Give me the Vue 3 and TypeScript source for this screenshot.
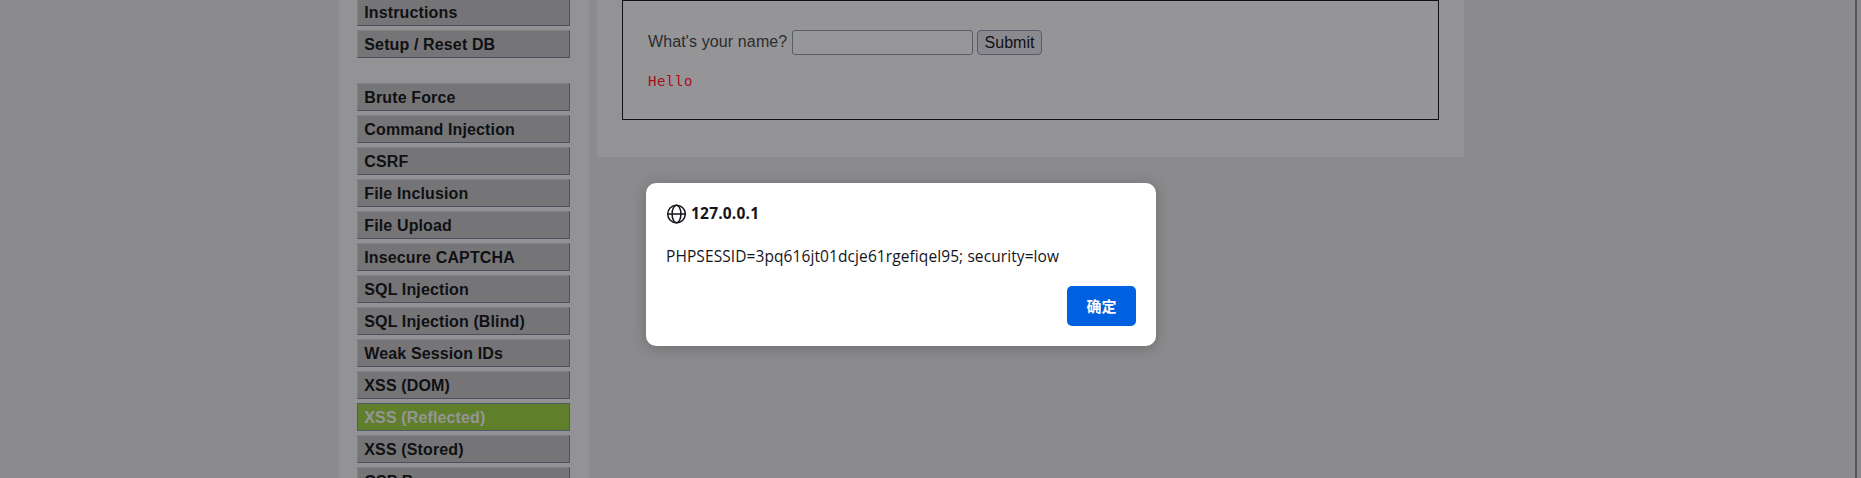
<script setup lang="ts">
interface MenuItem {
  label: string
  active?: boolean
}

const groups: MenuItem[][] = [
  [{ label: 'Instructions' }, { label: 'Setup / Reset DB' }],
  [
    { label: 'Brute Force' },
    { label: 'Command Injection' },
    { label: 'CSRF' },
    { label: 'File Inclusion' },
    { label: 'File Upload' },
    { label: 'Insecure CAPTCHA' },
    { label: 'SQL Injection' },
    { label: 'SQL Injection (Blind)' },
    { label: 'Weak Session IDs' },
    { label: 'XSS (DOM)' },
    { label: 'XSS (Reflected)', active: true },
    { label: 'XSS (Stored)' },
    { label: 'CSP Bypass' },
  ],
]
</script>

<template>
  <div class="page">
    <nav class="sidebar">
      <ul v-for="(group, index) in groups" :key="index" class="menu">
        <li v-for="item in group" :key="item.label" class="item" :class="{ active: item.active }">
          {{ item.label }}
        </li>
      </ul>
    </nav>
    <main class="content">
      <section class="panel">
        <form class="form" @submit.prevent>
          <label class="label" for="name">What's your name?</label>
          <input id="name" class="field" type="text" />
          <button class="submit" type="submit">Submit</button>
        </form>
        <pre class="reply">Hello</pre>
      </section>
    </main>
    <div class="scrollbar"></div>
    <div class="dialog" role="alertdialog">
      <header class="origin">
        <svg class="globe" viewBox="0 0 20 20" fill="none" stroke="#15141a" stroke-width="1.5">
          <circle cx="10.5" cy="10" r="8.8" />
          <ellipse cx="10.5" cy="10" rx="4.4" ry="8.8" />
          <path d="M1.7 10h17.6" />
        </svg>
        <span class="host">127.0.0.1</span>
      </header>
      <p class="message">PHPSESSID=3pq616jt01dcje61rgefiqel95; security=low</p>
      <button class="confirm" type="button">确定</button>
    </div>
  </div>
</template>

<style>
body {
  margin: 0;
  overflow: hidden;
}
</style>

<style scoped>
.page {
  position: relative;
  display: flex;
  align-items: flex-start;
  box-sizing: border-box;
  width: 1861px;
  height: 478px;
  padding-left: 339px;
  overflow: hidden;
  background: #8b8b8d;
  font-family: "Liberation Sans", Arial, sans-serif;
  font-size: 16px;
}
.sidebar {
  box-sizing: border-box;
  width: 250px;
  height: 478px;
  padding: 0 19px 0 18px;
  overflow: hidden;
  background: #939395;
}
.menu {
  display: flex;
  flex-direction: column;
  gap: 4px;
  margin: -2px 0 25px;
  padding: 0;
  list-style: none;
}
.menu + .menu {
  margin-top: 0;
}
.item {
  box-sizing: border-box;
  flex: none;
  height: 28px;
  padding-left: 6.3px;
  border: 1px solid;
  border-color: #808082 #4c4f5e #4c4f5e #808082;
  background: #757577;
  color: #101012;
  font-weight: bold;
  letter-spacing: 0.13px;
  line-height: 28px;
  white-space: nowrap;
}
.item.active {
  border-color: #4c5a68;
  background: #607f2a;
  color: #959597;
}
.content {
  box-sizing: border-box;
  width: 867px;
  height: 157px;
  margin-left: 8px;
  padding: 0 25px;
  background: #939395;
}
.panel {
  box-sizing: border-box;
  height: 120px;
  padding: 29px 25px 0;
  border: 1px solid #101012;
  background: #959597;
}
.form {
  display: flex;
  height: 25px;
}
.label {
  width: 144px;
  color: #2c2c2e;
  letter-spacing: 0.12px;
  line-height: 24px;
  white-space: nowrap;
}
.field {
  box-sizing: border-box;
  width: 181px;
  height: 25px;
  margin: 0 4px 0 0;
  padding: 0 3px;
  border: 1px solid #5b5a67;
  border-radius: 3px;
  outline: none;
  background: #979799;
}
.submit {
  box-sizing: border-box;
  width: 65px;
  height: 25px;
  padding: 0;
  border: 1px solid #5b5a67;
  border-radius: 4px;
  background: #8a898f;
  color: #101012;
  font: inherit;
  line-height: 23px;
}
.reply {
  margin: 17px 0 0;
  color: #a90d17;
  font: 14px/18px "DejaVu Sans Mono", monospace;
  letter-spacing: 0.6px;
}
.scrollbar {
  box-sizing: border-box;
  width: 6px;
  height: 478px;
  margin-left: auto;
  border-left: 2px solid #565658;
  background: #89898b;
}
.dialog {
  position: absolute;
  top: 183px;
  left: 646px;
  display: flex;
  flex-direction: column;
  box-sizing: border-box;
  width: 510px;
  height: 163px;
  padding: 20px;
  border-radius: 10px;
  background: #fff;
  box-shadow: 0 2px 14px rgba(20, 20, 26, 0.25);
  color: #15141a;
  font-family: "Open Sans", "Noto Sans", "Noto Sans CJK SC", sans-serif;
}
.origin {
  display: flex;
  align-items: center;
  gap: 5px;
  height: 21px;
}
.globe {
  width: 20px;
  height: 20px;
}
.host {
  margin-top: -1px;
  font-size: 15.5px;
  font-weight: 700;
  letter-spacing: 0.2px;
}
.message {
  margin: 20px 0 0;
  font-size: 15.5px;
  letter-spacing: 0.09px;
  line-height: 24px;
  white-space: nowrap;
}
.confirm {
  align-self: flex-end;
  width: 69px;
  height: 40px;
  margin-top: 18px;
  padding: 0;
  border: 0;
  border-radius: 5px;
  background: #0061e0;
  color: #fbfbfe;
  font: 700 15px/40px "Noto Sans CJK SC", sans-serif;
}
</style>
